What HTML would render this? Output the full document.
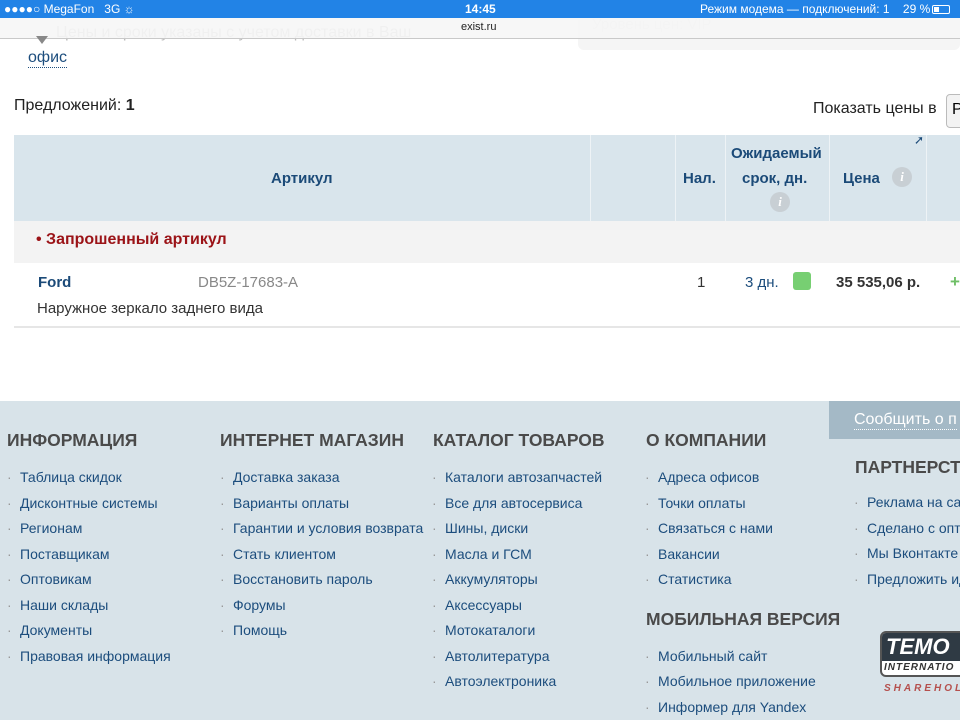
<!DOCTYPE html>
<html><head><meta charset="utf-8"><style>
*{margin:0;padding:0;box-sizing:border-box}
body{width:960px;height:720px;overflow:hidden;position:relative;background:#fff;font-family:"Liberation Sans","DejaVu Sans",sans-serif}
.a{position:absolute;white-space:nowrap}
.status{left:0;top:0;width:960px;height:18px;background:#2283e6;color:#fff;font-size:12px;line-height:18px}
.addr{left:0;top:18px;width:960px;height:21px;background:rgba(246,246,246,.9);border-bottom:1px solid #c9c9c9}
.th{color:#1b4a78;font-weight:bold;font-size:15px}
.foot{left:0;top:401px;width:960px;height:319px;background:#d8e3e9}
.h{font-size:17.5px;font-weight:bold;color:#4a4a4a;letter-spacing:0}
.li{font-size:14px;color:#1c4d7d}
.li:before{content:"·";position:absolute;left:-13px;color:#999}
.sep{position:absolute;top:135px;width:1px;height:86px;background:#eef3f6}
</style></head><body>
<div class="a status">
 <span class="a" style="left:4px">●●●●○ MegaFon&nbsp;&nbsp; 3G ☼</span>
 <span class="a" style="left:465px;font-weight:bold">14:45</span>
 <span class="a" style="left:700px">Режим модема — подключений: 1&nbsp;&nbsp;&nbsp; 29 %</span>
 <span class="a" style="left:932px;top:5px;width:18px;height:9px;border:1px solid #fff;border-radius:2px"><span class="a" style="left:1px;top:1px;width:5px;height:5px;background:#fff"></span></span>
</div>
<div class="a" style="left:578px;top:20px;width:382px;height:30px;background:#f5f5f5;border-radius:0 0 6px 6px"></div>
<div class="a" style="left:56px;top:24px;font-size:16px;color:#bbb">Цены и сроки указаны с учетом доставки в Ваш</div>
<div class="a" style="left:592px;top:16px;font-size:15px;color:#ddd">Уровень цен: VIP</div>
<div class="a addr"></div>
<div class="a" style="left:461px;top:21px;font-size:11px;color:#222">exist.ru</div>
<div class="a" style="left:36px;top:36px;width:0;height:0;border-left:6px solid transparent;border-right:6px solid transparent;border-top:8px solid #888"></div>
<div class="a" style="left:28px;top:49px;font-size:16px;color:#1c4d7d;border-bottom:1px dotted #1c4d7d;line-height:18px">офис</div>
<div class="a" style="left:14px;top:97px;font-size:16px;color:#222">Предложений: <b>1</b></div>
<div class="a" style="left:813px;top:100px;font-size:16px;color:#222">Показать цены в</div>
<div class="a" style="left:946px;top:94px;width:30px;height:34px;border:1px solid #bbb;border-radius:4px;background:#f3f3f3;font-size:16px;padding:6px 5px">Р</div>

<div class="a" style="left:14px;top:135px;width:946px;height:86px;background:#d9e5ec"></div>
<div class="sep" style="left:590px"></div><div class="sep" style="left:675px"></div><div class="sep" style="left:725px"></div><div class="sep" style="left:829px"></div><div class="sep" style="left:926px"></div>
<div class="a th" style="left:271px;top:170px">Артикул</div>
<div class="a th" style="left:683px;top:170px">Нал.</div>
<div class="a th" style="left:731px;top:145px">Ожидаемый</div>
<div class="a th" style="left:742px;top:170px">срок, дн.</div>
<div class="a" style="left:770px;top:192px;width:20px;height:20px;border-radius:50%;background:#c8cfd4;color:#fff;font:italic bold 13px 'Liberation Serif',serif;text-align:center;line-height:20px">i</div>
<div class="a th" style="left:843px;top:170px">Цена</div>
<div class="a" style="left:892px;top:167px;width:20px;height:20px;border-radius:50%;background:#c8cfd4;color:#fff;font:italic bold 13px 'Liberation Serif',serif;text-align:center;line-height:20px">i</div>
<div class="a" style="left:914px;top:133px;font-size:12px;color:#1b4a78;font-weight:bold">➚</div>

<div class="a" style="left:14px;top:221px;width:946px;height:42px;background:#f3f3f3"></div>
<div class="a" style="left:36px;top:231px;font-size:16px;font-weight:bold;color:#9b1317">• Запрошенный артикул</div>
<div class="a" style="left:38px;top:274px;font-size:15px;font-weight:bold;color:#1b4a78">Ford</div>
<div class="a" style="left:198px;top:274px;font-size:15px;color:#888">DB5Z-17683-A</div>
<div class="a" style="left:37px;top:300px;font-size:15px;color:#333">Наружное зеркало заднего вида</div>
<div class="a" style="left:697px;top:274px;font-size:15px;color:#333">1</div>
<div class="a" style="left:745px;top:274px;font-size:15px;color:#1c4d7d">3 дн.</div>
<div class="a" style="left:793px;top:272px;width:18px;height:18px;background:#77cf72;border-radius:3px"></div>
<div class="a" style="left:836px;top:274px;font-size:15px;font-weight:bold;color:#333">35 535,06 р.</div>
<div class="a" style="left:950px;top:272px;font-size:17px;font-weight:bold;color:#6fbf67">+</div>
<div class="a" style="left:14px;top:326px;width:946px;height:2px;background:#e6e6e6"></div>

<div class="a foot"></div>
<div class="a" style="left:829px;top:401px;width:131px;height:38px;background:#a4b9c6"></div>
<div class="a" style="left:854px;top:411px;font-size:16px;color:#fff;border-bottom:1px dotted #fff;line-height:18px">Сообщить о п</div>

<div class="a h" style="left:7px;top:430px">ИНФОРМАЦИЯ</div>
<div class="a h" style="left:220px;top:430px">ИНТЕРНЕТ МАГАЗИН</div>
<div class="a h" style="left:433px;top:430px">КАТАЛОГ ТОВАРОВ</div>
<div class="a h" style="left:646px;top:430px">О КОМПАНИИ</div>
<div class="a h" style="left:646px;top:609px">МОБИЛЬНАЯ ВЕРСИЯ</div>
<div class="a h" style="left:855px;top:457px">ПАРТНЕРСТВО</div>

<div class="a li" style="left:20px;top:469px">Таблица скидок</div>
<div class="a li" style="left:20px;top:495px">Дисконтные системы</div>
<div class="a li" style="left:20px;top:520px">Регионам</div>
<div class="a li" style="left:20px;top:546px">Поставщикам</div>
<div class="a li" style="left:20px;top:571px">Оптовикам</div>
<div class="a li" style="left:20px;top:597px">Наши склады</div>
<div class="a li" style="left:20px;top:622px">Документы</div>
<div class="a li" style="left:20px;top:648px">Правовая информация</div>

<div class="a li" style="left:233px;top:469px">Доставка заказа</div>
<div class="a li" style="left:233px;top:495px">Варианты оплаты</div>
<div class="a li" style="left:233px;top:520px">Гарантии и условия возврата</div>
<div class="a li" style="left:233px;top:546px">Стать клиентом</div>
<div class="a li" style="left:233px;top:571px">Восстановить пароль</div>
<div class="a li" style="left:233px;top:597px">Форумы</div>
<div class="a li" style="left:233px;top:622px">Помощь</div>

<div class="a li" style="left:445px;top:469px">Каталоги автозапчастей</div>
<div class="a li" style="left:445px;top:495px">Все для автосервиса</div>
<div class="a li" style="left:445px;top:520px">Шины, диски</div>
<div class="a li" style="left:445px;top:546px">Масла и ГСМ</div>
<div class="a li" style="left:445px;top:571px">Аккумуляторы</div>
<div class="a li" style="left:445px;top:597px">Аксессуары</div>
<div class="a li" style="left:445px;top:622px">Мотокаталоги</div>
<div class="a li" style="left:445px;top:648px">Автолитература</div>
<div class="a li" style="left:445px;top:673px">Автоэлектроника</div>

<div class="a li" style="left:658px;top:469px">Адреса офисов</div>
<div class="a li" style="left:658px;top:495px">Точки оплаты</div>
<div class="a li" style="left:658px;top:520px">Связаться с нами</div>
<div class="a li" style="left:658px;top:546px">Вакансии</div>
<div class="a li" style="left:658px;top:571px">Статистика</div>
<div class="a li" style="left:658px;top:648px">Мобильный сайт</div>
<div class="a li" style="left:658px;top:673px">Мобильное приложение</div>
<div class="a li" style="left:658px;top:699px">Информер для Yandex</div>

<div class="a li" style="left:867px;top:494px">Реклама на сайте</div>
<div class="a li" style="left:867px;top:520px">Сделано с опт</div>
<div class="a li" style="left:867px;top:545px">Мы Вконтакте</div>
<div class="a li" style="left:867px;top:571px">Предложить идею</div>

<div class="a" style="left:880px;top:631px;width:90px;height:46px;background:#fff;border:2px solid #555;border-radius:6px;overflow:hidden">
 <div class="a" style="left:0;top:0;width:90px;height:28px;background:#2f3a44;color:#fff;font:italic bold 22px 'Liberation Sans',sans-serif;padding-left:4px;line-height:28px">TEMO</div>
 <div class="a" style="left:2px;top:29px;font:italic bold 10px 'Liberation Sans',sans-serif;color:#333;letter-spacing:1px">INTERNATIO</div>
</div>
<div class="a" style="left:884px;top:683px;font:italic bold 10px 'Liberation Sans',sans-serif;color:#b5504d;letter-spacing:3px">SHAREHOLD</div>
</body></html>
